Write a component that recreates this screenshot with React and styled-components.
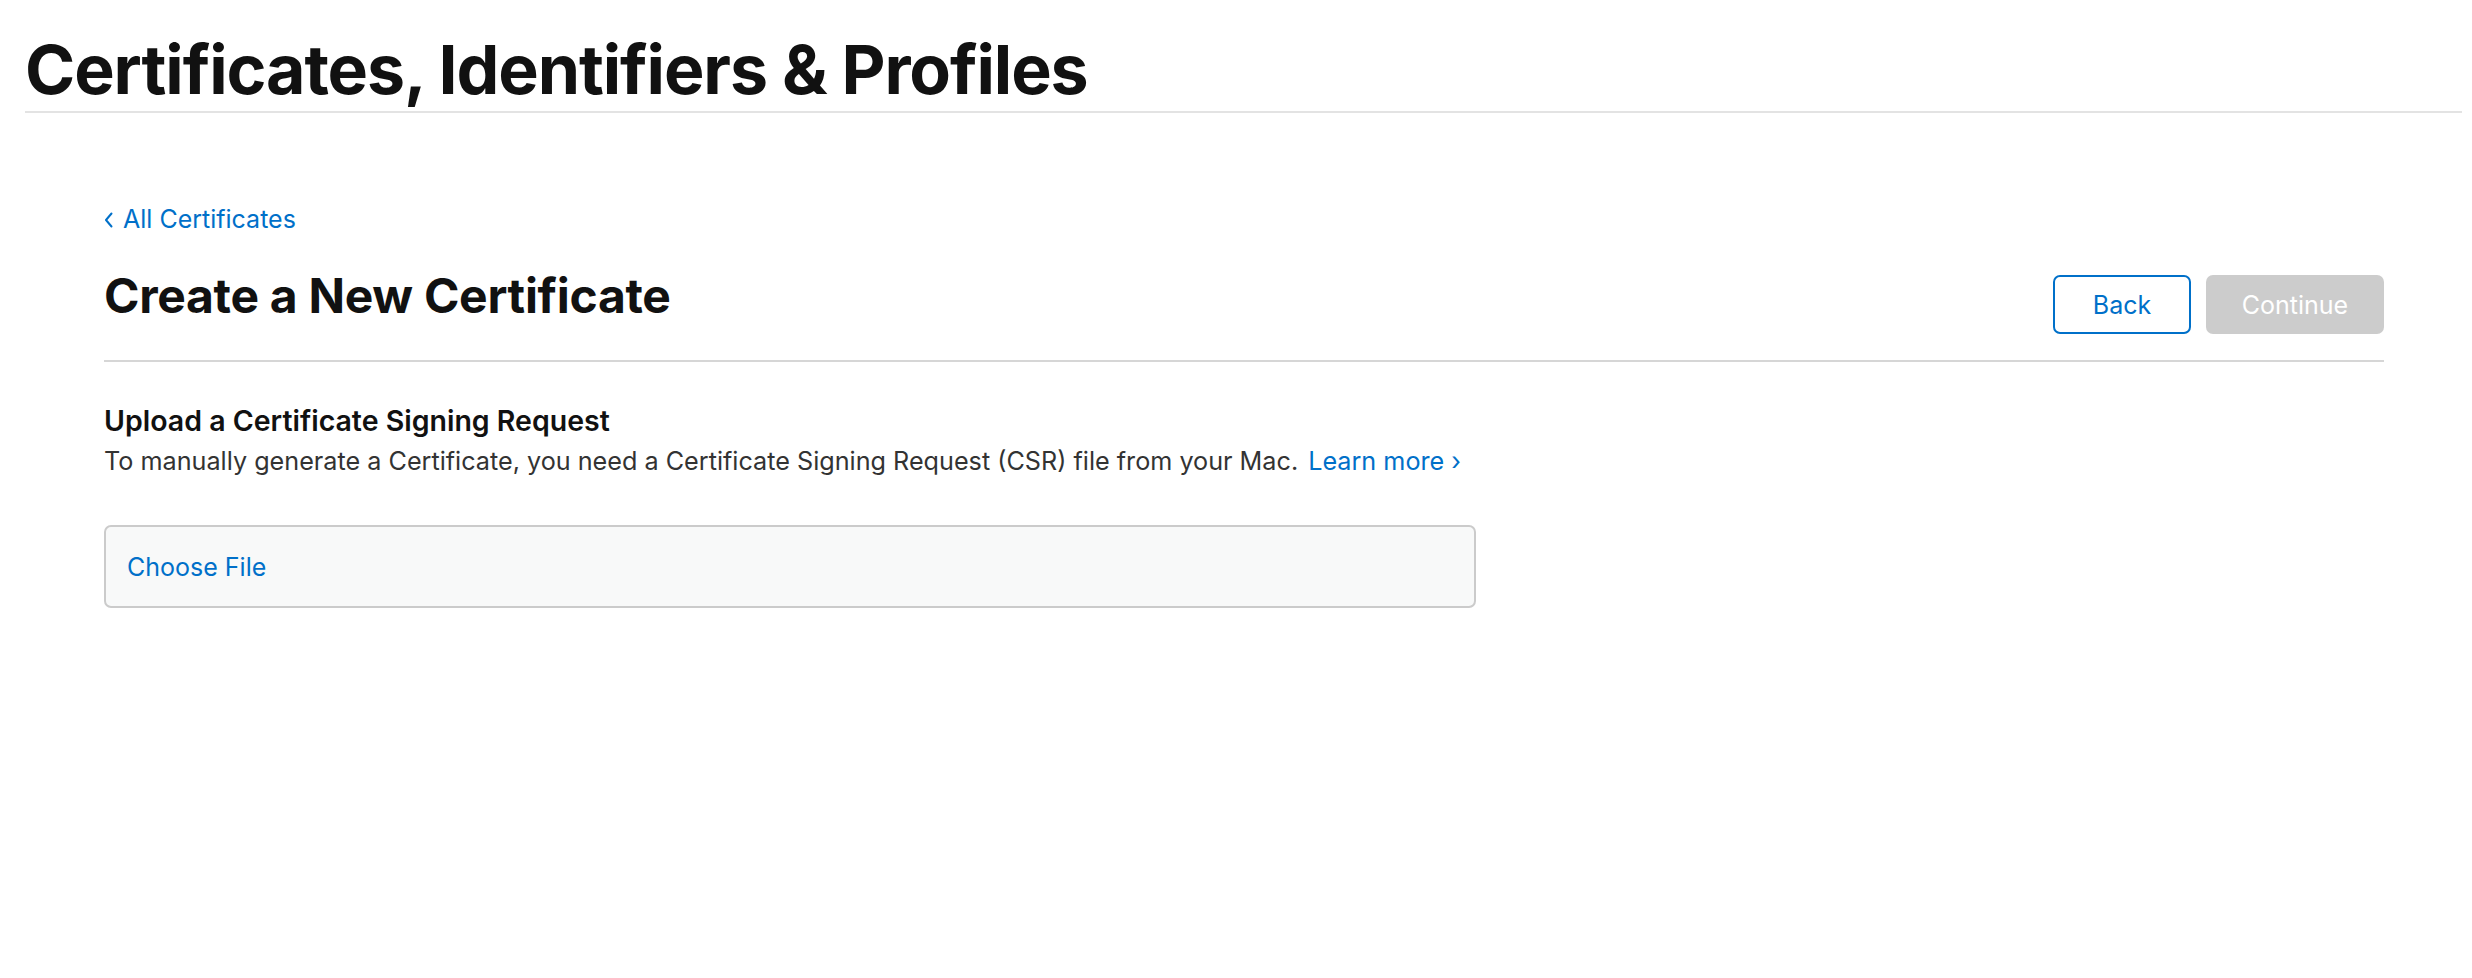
import React from "react";
import styled, { createGlobalStyle } from "styled-components";

const GlobalStyle = createGlobalStyle`
  html, body {
    margin: 0;
    padding: 0;
    background: #ffffff;
  }
  body {
    font-family: Inter, "Noto Sans", "Liberation Sans", sans-serif;
    color: #111111;
    -webkit-font-smoothing: antialiased;
  }
`;

const Page = styled.div`
  width: 2472px;
  min-height: 978px;
  box-sizing: border-box;
  padding: 0 10px 0 25px;
`;

const Header = styled.header`
  padding-top: 27px;
  border-bottom: 2px solid #e3e3e3;
`;

const PageTitle = styled.h1`
  margin: 0;
  font-size: 68px;
  line-height: 84px;
  font-weight: 700;
  letter-spacing: -1.1px;
  color: #111111;
`;

const Content = styled.main`
  padding: 0 78px 0 79px;
`;

const BackLink = styled.a`
  display: inline-flex;
  align-items: center;
  gap: 10px;
  margin-top: 88px;
  font-size: 25px;
  line-height: 36px;
  color: #0070c9;
  text-decoration: none;
  cursor: pointer;
`;

const Chevron = styled.svg`
  width: 9px;
  height: 16px;
  margin-top: 2px;
`;

const TitleRow = styled.div`
  display: flex;
  align-items: flex-start;
  justify-content: space-between;
  padding: 29px 0 26px;
  border-bottom: 2px solid #d6d6d6;
`;

const SectionTitle = styled.h2`
  margin: 0;
  font-size: 48px;
  line-height: 60px;
  font-weight: 700;
  letter-spacing: -0.3px;
  color: #111111;
`;

const Actions = styled.div`
  display: flex;
  gap: 15px;
  margin-top: 9px;
`;

const Button = styled.button`
  box-sizing: border-box;
  height: 59px;
  min-width: ${(p) => (p.$primary ? "178px" : "138px")};
  padding: 0 30px;
  border-radius: 7px;
  font-family: inherit;
  font-size: 25px;
  cursor: pointer;
  border: ${(p) => (p.$primary ? "none" : "2px solid #0070c9")};
  background: ${(p) => (p.$primary ? "#cccccc" : "#ffffff")};
  color: ${(p) => (p.$primary ? "#ffffff" : "#0070c9")};
`;

const Section = styled.section`
  padding-top: 40px;
`;

const Heading = styled.h3`
  margin: 0;
  font-size: 28.5px;
  line-height: 38px;
  font-weight: 600;
  color: #111111;
`;

const Description = styled.p`
  margin: 3px 0 0;
  font-size: 25.2px;
  line-height: 36px;
  color: #333333;
`;

const InlineLink = styled.a`
  margin-left: 10px;
  color: #0070c9;
  text-decoration: none;
  cursor: pointer;
`;

const FileBox = styled.label`
  display: flex;
  align-items: center;
  box-sizing: border-box;
  width: 1372px;
  height: 83px;
  margin-top: 46px;
  padding: 0 21px;
  background: #f8f9f9;
  border: 2px solid #cbcbcb;
  border-radius: 7px;
  font-size: 25px;
  color: #0070c9;
  cursor: pointer;
`;

const HiddenInput = styled.input`
  display: none;
`;

const App = () => {
  return (
    <>
      <GlobalStyle />
      <Page>
        <Header>
          <PageTitle>Certificates, Identifiers &amp; Profiles</PageTitle>
        </Header>
        <Content>
          <BackLink>
            <Chevron viewBox="0 0 9 16" fill="none">
              <path d="M7.5 1.5L2 8l5.5 6.5" stroke="#0070c9" strokeWidth="2" strokeLinecap="round" strokeLinejoin="round" />
            </Chevron>
            All Certificates
          </BackLink>
          <TitleRow>
            <SectionTitle>Create a New Certificate</SectionTitle>
            <Actions>
              <Button>Back</Button>
              <Button $primary disabled>Continue</Button>
            </Actions>
          </TitleRow>
          <Section>
            <Heading>Upload a Certificate Signing Request</Heading>
            <Description>
              To manually generate a Certificate, you need a Certificate Signing Request (CSR) file from your Mac.
              <InlineLink>Learn more ›</InlineLink>
            </Description>
            <FileBox>
              Choose File
              <HiddenInput type="file" />
            </FileBox>
          </Section>
        </Content>
      </Page>
    </>
  );
};

export default App;
